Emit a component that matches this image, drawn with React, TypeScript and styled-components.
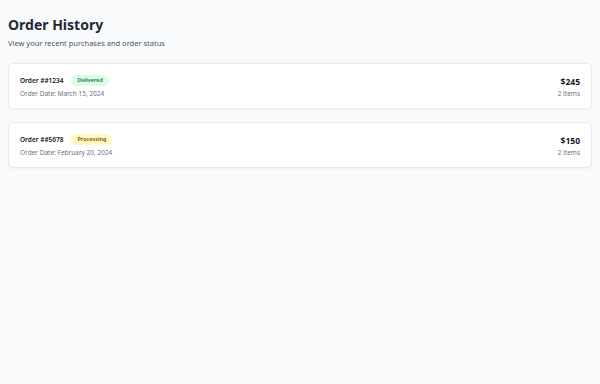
import styled, { createGlobalStyle } from "styled-components";

const GlobalStyle = createGlobalStyle`
  html, body {
    margin: 0;
    padding: 0;
    background: #f9fafb;
    font-family: "Noto Sans", "Open Sans", sans-serif;
    color: #111827;
  }
`;

const Page = styled.div`
  min-height: 384px;
  padding: 8px;
  box-sizing: border-box;
  background: #f9fafb;
`;

const Title = styled.h1`
  margin: 7px 0 0;
  font-size: 14px;
  line-height: 20px;
  font-weight: 700;
  color: #1f2937;
`;

const Subtitle = styled.p`
  margin: 2px 0 14px;
  font-size: 7.5px;
  line-height: 12px;
  color: #4b5563;
`;

const List = styled.div`
  display: flex;
  flex-direction: column;
  gap: 13px;
`;

const Card = styled.div`
  display: flex;
  justify-content: space-between;
  align-items: center;
  padding: 11px 11px 10px;
  background: #ffffff;
  border: 1px solid #e8eaee;
  border-radius: 5px;
  box-shadow: 0 1px 2px rgba(0, 0, 0, 0.04);
`;

const Left = styled.div`
  display: flex;
  flex-direction: column;
  gap: 3px;
`;

const Head = styled.div`
  display: flex;
  align-items: center;
  gap: 8px;
  height: 11px;
`;

const OrderId = styled.span`
  font-size: 6.5px;
  line-height: 11px;
  font-weight: 600;
  color: #111827;
`;

const Badge = styled.span<{ $tone: "green" | "yellow" }>`
  font-size: 5.5px;
  line-height: 11px;
  font-weight: 600;
  padding: 0 6px;
  border-radius: 999px;
  background: ${(p) => (p.$tone === "green" ? "#dcfce7" : "#fef9c3")};
  color: ${(p) => (p.$tone === "green" ? "#15803d" : "#854d0e")};
`;

const DateText = styled.span`
  font-size: 6.5px;
  line-height: 9px;
  color: #6b7280;
`;

const Right = styled.div`
  display: flex;
  flex-direction: column;
  align-items: flex-end;
  gap: 1px;
`;

const Price = styled.span`
  font-size: 8.5px;
  line-height: 12px;
  font-weight: 700;
  color: #111827;
`;

const Items = styled.span`
  font-size: 6.5px;
  line-height: 9px;
  color: #6b7280;
`;

const orders = [
  { id: "#1234", status: "Delivered", tone: "green" as const, date: "March 15, 2024", total: 245, items: 2 },
  { id: "#5678", status: "Processing", tone: "yellow" as const, date: "February 20, 2024", total: 150, items: 2 },
];

export default function App() {
  return (
    <>
      <GlobalStyle />
      <Page>
        <Title>Order History</Title>
        <Subtitle>View your recent purchases and order status</Subtitle>
        <List>
          {orders.map((o) => (
            <Card key={o.id}>
              <Left>
                <Head>
                  <OrderId>Order #{o.id}</OrderId>
                  <Badge $tone={o.tone}>{o.status}</Badge>
                </Head>
                <DateText>Order Date: {o.date}</DateText>
              </Left>
              <Right>
                <Price>${o.total}</Price>
                <Items>{o.items} items</Items>
              </Right>
            </Card>
          ))}
        </List>
      </Page>
    </>
  );
}
